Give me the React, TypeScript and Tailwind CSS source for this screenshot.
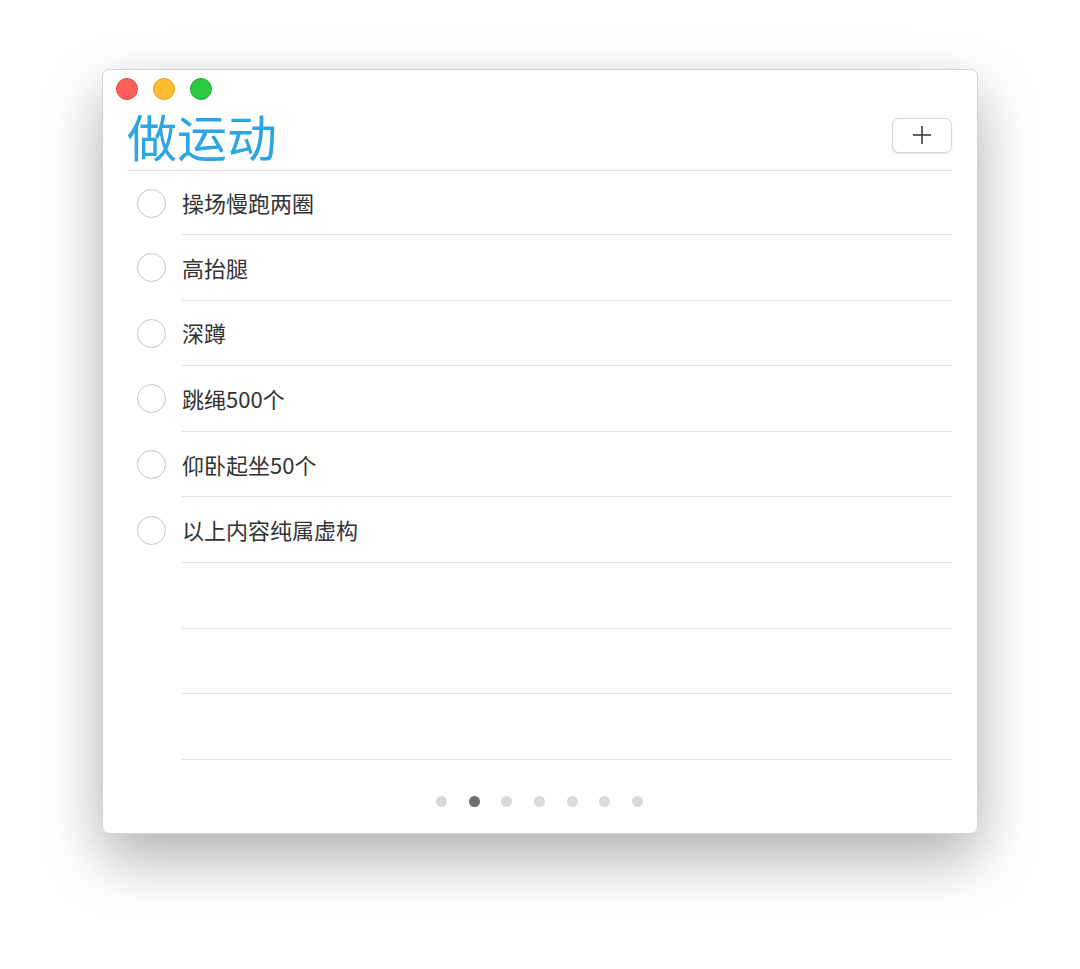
import React from "react";

const items = ["操场慢跑两圈", "高抬腿", "深蹲", "跳绳500个", "仰卧起坐50个", "以上内容纯属虚构", "", "", ""];

export default function App() {
  return (
    <div
      className="w-[1080px] h-[969px] bg-white pt-[69px] pl-[102px]"
      style={{ fontFamily: '"Noto Sans CJK SC", "Noto Sans", sans-serif' }}
    >
      <div className="w-[876px] h-[765px] bg-white rounded-[7px] border border-[#d4d4d4] shadow-[0_24px_60px_rgba(0,0,0,0.32)] flex flex-col">
        <div className="flex gap-[15px] pl-[13px] pt-[8px]">
          <div className="w-[22px] h-[22px] rounded-full bg-[#fe5f57] border border-[#e2463f]" />
          <div className="w-[22px] h-[22px] rounded-full bg-[#febc2e] border border-[#e1a116]" />
          <div className="w-[22px] h-[22px] rounded-full bg-[#28c840] border border-[#1aab29]" />
        </div>
        <div className="pl-[24px] pr-[25px]">
          <div className="flex items-center justify-between h-[50px] mt-[10px]">
            <div className="text-[50px] leading-[50px] text-[#2ba5e4]">做运动</div>
            <div className="w-[60px] h-[35px] rounded-[7px] border border-[#d6d6d6] shadow-[0_1px_2px_rgba(0,0,0,0.12)] flex items-center justify-center bg-white">
              <svg width="20" height="20" viewBox="0 0 20 20">
                <path d="M10 1v18M1 10h18" stroke="#333" strokeWidth="1.5" />
              </svg>
            </div>
          </div>
          <div className="h-[11px] border-b border-[#dedede]" />
          {items.map((t, i) => (
            <div key={i} className={i === 0 ? "flex h-[64px]" : "flex h-[65.6px]"}>
              <div className="w-[55px] flex items-center pl-[10px]">
                {t !== "" && (
                  <div className="w-[29px] h-[29px] rounded-full border-[1.5px] border-[#c4c4c4]" />
                )}
              </div>
              <div className="flex-1 flex items-center border-b border-[#e2e2e2] text-[22px] text-[#333]">
                {t}
              </div>
            </div>
          ))}
          <div className="flex justify-center gap-[21.7px] pt-[36px]">
            {[0, 1, 2, 3, 4, 5, 6].map((i) => (
              <div
                key={i}
                className={
                  i === 1
                    ? "w-[11px] h-[11px] rounded-full bg-[#707070]"
                    : "w-[11px] h-[11px] rounded-full bg-[#d9d9d9]"
                }
              />
            ))}
          </div>
        </div>
      </div>
    </div>
  );
}
